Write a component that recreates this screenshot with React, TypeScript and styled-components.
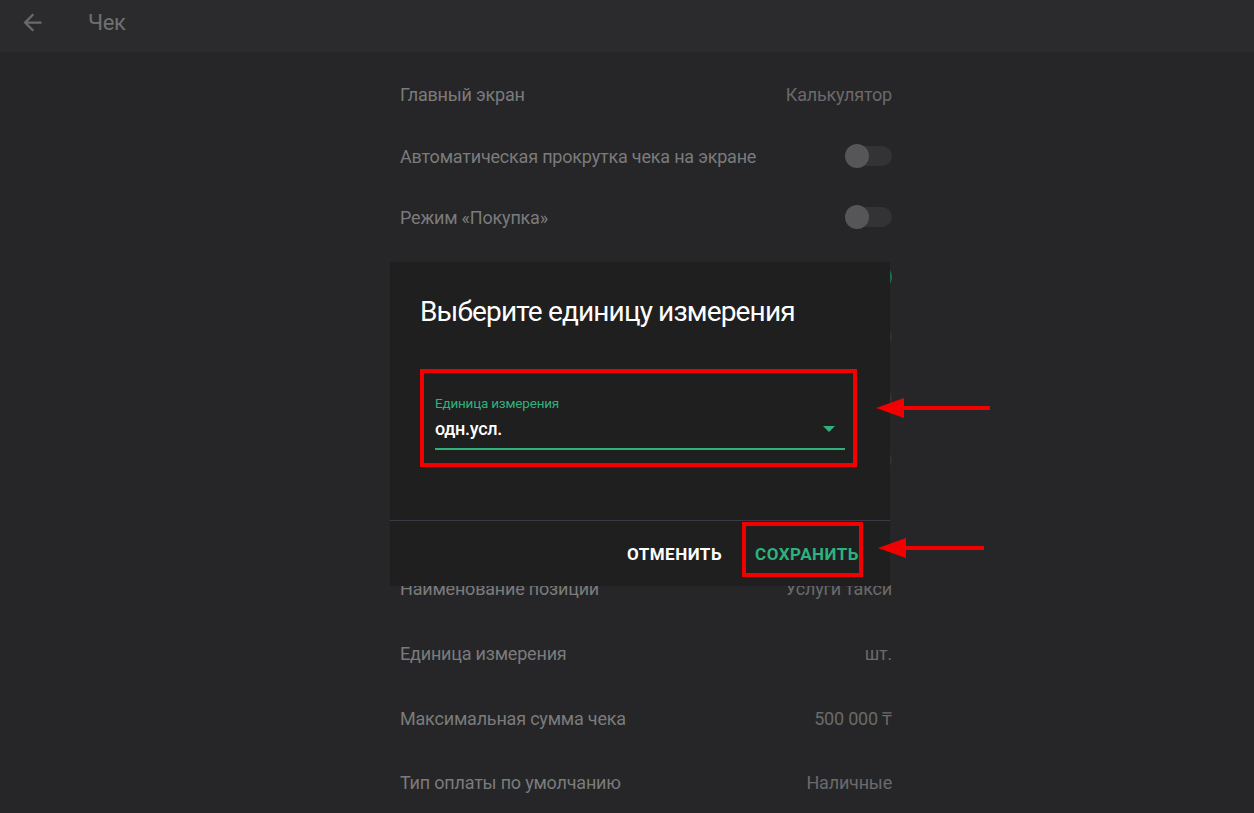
import styled, { createGlobalStyle } from "styled-components";

const GlobalStyle = createGlobalStyle`
  *{box-sizing:border-box}
  html,body{margin:0;height:100%;}
  body{background:#262628;font-family:Roboto,"Liberation Sans",sans-serif;overflow:hidden;}
`;

const Page = styled.div`width:1254px;height:813px;position:relative;overflow:hidden;`;
const TopBar = styled.header`
  height:52px;background:#2b2b2d;display:flex;align-items:center;padding:0 0 0 19px;gap:42px;
`;
const Title = styled.div`color:#707070;font-size:22px;letter-spacing:-0.4px;margin-top:-8px;`;
const BackIcon = styled.svg`width:27px;height:27px;margin-top:-8px;`;

const Column = styled.div`width:492px;margin:0 0 0 400px;padding-top:11px;`;
const Row = styled.div<{ h: number }>`
  height:${p => p.h}px;display:flex;align-items:center;justify-content:space-between;
  color:#7b7b7b;font-size:18px;letter-spacing:-0.2px;
`;
const Value = styled.span`color:#6a6a6a;`;
const Toggle = styled.span<{ on?: boolean }>`
  width:47px;height:20px;border-radius:10px;position:relative;
  background:${p => p.on ? "#1d4a3c" : "#333335"};
  &::after{content:"";position:absolute;top:-2px;${p => p.on ? "right:0" : "left:0"};
    width:24px;height:24px;border-radius:50%;background:${p => p.on ? "#1f6a52" : "#565658"};}
`;

const Dialog = styled.div`
  position:absolute;left:390px;top:262px;width:500px;height:324px;background:#1f1f1f;
  display:flex;flex-direction:column;
`;
const DialogBody = styled.div`flex:1;padding:33px 45px 0 30px;`;
const DialogTitle = styled.h2`
  margin:0;color:#fff;font-weight:400;font-size:28px;letter-spacing:-0.85px;
`;
const Field = styled.div`margin:67px 0 0 15px;border-bottom:2px solid #2db27e;padding-bottom:9px;`;
const FieldLabel = styled.div`color:#2db27e;font-size:13.5px;letter-spacing:-0.2px;`;
const FieldValue = styled.div`
  display:flex;justify-content:space-between;align-items:center;margin-top:7px;
  color:#fff;font-size:18px;font-weight:500;letter-spacing:-0.3px;
`;
const Caret = styled.span`
  width:0;height:0;border-left:6px solid transparent;border-right:6px solid transparent;
  border-top:6px solid #2db27e;margin-right:10px;
`;
const Footer = styled.div`
  height:66px;border-top:1px solid #3a3a44;display:flex;justify-content:flex-end;align-items:center;
  gap:33px;padding:0 31px 0 0;
`;
const Btn = styled.button<{ primary?: boolean }>`
  background:none;border:0;padding:0;cursor:pointer;font-family:inherit;
  font-size:17px;font-weight:700;letter-spacing:0.5px;color:${p => p.primary ? "#2db27e" : "#fff"};
`;

const Mark = styled.div`position:absolute;border:4px solid #f20000;pointer-events:none;`;
const Arrow = styled.svg`position:absolute;pointer-events:none;`;

export default function App() {
  return (
    <>
      <GlobalStyle />
      <Page>
        <TopBar>
          <BackIcon viewBox="0 0 24 24">
            <path d="M20 11H7.83l5.59-5.59L12 4l-8 8 8 8 1.41-1.41L7.83 13H20v-2z" fill="#6a6a6a" />
          </BackIcon>
          <Title>Чек</Title>
        </TopBar>
        <Column>
          <Row h={62}><span>Главный экран</span><Value>Калькулятор</Value></Row>
          <Row h={62}><span>Автоматическая прокрутка чека на экране</span><Toggle /></Row>
          <Row h={60}><span>Режим «Покупка»</span><Toggle /></Row>
          {/* rows hidden behind the dialog: only the toggle edges show */}
          <Row h={60}><span /><Toggle on /></Row>
          <Row h={60}><span /><Toggle /></Row>
          <Row h={62}><span /><Toggle /></Row>
          <Row h={62}><span /><Toggle /></Row>
          <Row h={64}><span /><span /></Row>
          <Row h={66}><span>Наименование позиции</span><Value>Услуги такси</Value></Row>
          <Row h={65}><span>Единица измерения</span><Value>шт.</Value></Row>
          <Row h={64}><span>Максимальная сумма чека</span><Value>500 000 ₸</Value></Row>
          <Row h={65}><span>Тип оплаты по умолчанию</span><Value>Наличные</Value></Row>
        </Column>

        <Dialog>
          <DialogBody>
            <DialogTitle>Выберите единицу измерения</DialogTitle>
            <Field>
              <FieldLabel>Единица измерения</FieldLabel>
              <FieldValue>одн.усл.<Caret /></FieldValue>
            </Field>
          </DialogBody>
          <Footer>
            <Btn>ОТМЕНИТЬ</Btn>
            <Btn primary>СОХРАНИТЬ</Btn>
          </Footer>
        </Dialog>

        <Mark style={{ left: 420, top: 369, width: 437, height: 98 }} />
        <Mark style={{ left: 742, top: 522, width: 121, height: 55 }} />
        <Arrow style={{ left: 874, top: 396 }} width="118" height="24" viewBox="0 0 118 24">
          <polygon points="2,12 30,2 30,22" fill="#f20000" />
          <rect x="28" y="10" width="88" height="4" fill="#f20000" />
        </Arrow>
        <Arrow style={{ left: 876, top: 536 }} width="110" height="24" viewBox="0 0 110 24">
          <polygon points="2,12 30,2 30,22" fill="#f20000" />
          <rect x="28" y="10" width="80" height="4" fill="#f20000" />
        </Arrow>
      </Page>
    </>
  );
}
